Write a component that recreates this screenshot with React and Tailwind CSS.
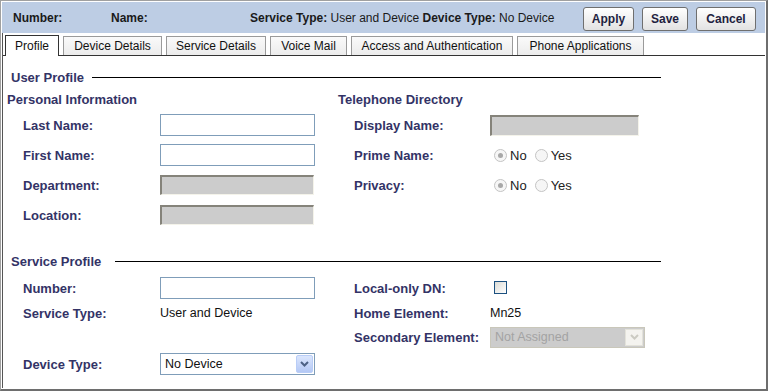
import React from "react";

function Btn({ w, children }) {
  return (
    <div
      className={`${w} h-[24px] flex items-center justify-center rounded-[3px] border border-[#6f6f6f] bg-gradient-to-b from-white to-[#e2e2e2] font-bold text-[12px] text-[#1f1f3f]`}
    >
      {children}
    </div>
  );
}

function Tab({ w, active, children }) {
  if (active) {
    return (
      <div
        className={`${w} h-[21px] -mb-px flex items-center justify-center border border-b-0 border-[#333] bg-white text-[12px] text-[#111]`}
      >
        {children}
      </div>
    );
  }
  return (
    <div
      className={`${w} h-[19px] flex items-center justify-center border border-b-0 border-[#9a9a9a] bg-gradient-to-b from-[#fafafa] to-[#ececec] text-[12px] text-[#111]`}
    >
      {children}
    </div>
  );
}

function Label({ w, children }) {
  return <div className={`${w} shrink-0 font-bold text-[13px] text-[#333366]`}>{children}</div>;
}

function TextInput() {
  return <div className="w-[155px] h-[22px] border border-[#7f9db9] bg-white" />;
}

function DisabledInput({ w, h }) {
  return (
    <div
      className={`${w} ${h} bg-[#cccccc] border-t-2 border-l-2 border-b border-r border-t-[#85837a] border-l-[#85837a] border-b-[#f4f3ea] border-r-[#f4f3ea]`}
    />
  );
}

function Radio({ checked }) {
  return (
    <div className="w-[13px] h-[13px] rounded-full border border-[#c4c4c4] bg-[#f6f6f6] flex items-center justify-center">
      {checked && <div className="w-[5px] h-[5px] rounded-full bg-[#a8a8a8]" />}
    </div>
  );
}

function RadioGroup() {
  return (
    <div className="flex items-center text-[13px] text-[#222]">
      <div className="ml-[4px]">
        <Radio checked />
      </div>
      <span className="ml-[3px]">No</span>
      <div className="ml-[8px]">
        <Radio />
      </div>
      <span className="ml-[3px]">Yes</span>
    </div>
  );
}

function Chevron({ color }) {
  return (
    <svg width="9" height="6" viewBox="0 0 9 6">
      <path d="M1 1 L4.5 4.5 L8 1" fill="none" stroke={color} strokeWidth="2" />
    </svg>
  );
}

function Row({ h, left, right }) {
  return (
    <div className={`${h} flex items-center`}>
      <div className="w-[335px] shrink-0 pl-[20px] flex items-center">{left}</div>
      <div className="pl-[16px] flex items-center">{right}</div>
    </div>
  );
}

function Heading({ children, mt, gap }) {
  return (
    <div className={`${mt} h-[16px] w-[658px] flex items-center pl-[8px]`}>
      <span className="font-bold text-[13px] text-[#333366] whitespace-nowrap">{children}</span>
      <div className={`flex-1 ${gap} border-t border-black`} />
    </div>
  );
}

export default function App() {
  return (
    <div className="w-[769px] h-[392px] bg-white font-['Liberation_Sans',Arial,sans-serif] text-[12px] leading-none">
      <div className="w-[768px] h-[391px] flex flex-col border-t border-l border-[#a0a0a0] border-r-2 border-b-2 border-r-[#6e6e6e] border-b-[#6e6e6e] p-px">
        {/* header bar */}
        <div className="h-[31px] shrink-0 bg-[#bdcde4] flex items-center pl-[11px] pr-[9px] text-[12px] text-[#1a1a1a]">
          <span className="font-bold w-[98px]">Number:</span>
          <span className="font-bold w-[139px]">Name:</span>
          <span className="whitespace-pre">
            <b>Service Type:</b> User and Device <b>Device Type:</b> No Device
          </span>
          <div className="ml-auto flex gap-[8px] mt-[3px]">
            <Btn w="w-[51px]">Apply</Btn>
            <Btn w="w-[46px]">Save</Btn>
            <Btn w="w-[60px]">Cancel</Btn>
          </div>
        </div>

        <div className="flex-1 flex flex-col border-l border-[#555]">
          {/* tabs */}
          <div className="h-[23px] shrink-0 flex items-end gap-[4px] pl-[2px] border-b border-[#333]">
            <Tab w="w-[54px]" active>Profile</Tab>
            <Tab w="w-[99px]">Device Details</Tab>
            <Tab w="w-[100px]">Service Details</Tab>
            <Tab w="w-[77px]">Voice Mail</Tab>
            <Tab w="w-[162px]">Access and Authentication</Tab>
            <Tab w="w-[127px]">Phone Applications</Tab>
          </div>

          {/* content */}
          <div className="flex flex-col">
            <Heading mt="mt-[13px]" gap="ml-[8px]">User Profile</Heading>

            <div className="mt-[6px] h-[16px] flex items-center font-bold text-[13px] text-[#333366]">
              <div className="w-[335px] pl-[4px]">Personal Information</div>
              <div>Telephone Directory</div>
            </div>

            <div className="mt-[3px]">
              <Row
                h="h-[30px]"
                left={<><Label w="w-[137px]">Last Name:</Label><TextInput /></>}
                right={<><Label w="w-[136px]">Display Name:</Label><DisabledInput w="w-[149px]" h="h-[21px]" /></>}
              />
              <Row
                h="h-[30px]"
                left={<><Label w="w-[137px]">First Name:</Label><TextInput /></>}
                right={<><Label w="w-[136px]">Prime Name:</Label><RadioGroup /></>}
              />
              <Row
                h="h-[30px]"
                left={<><Label w="w-[137px]">Department:</Label><DisabledInput w="w-[154px]" h="h-[20px]" /></>}
                right={<><Label w="w-[136px]">Privacy:</Label><RadioGroup /></>}
              />
              <Row
                h="h-[30px]"
                left={<><Label w="w-[137px]">Location:</Label><DisabledInput w="w-[154px]" h="h-[20px]" /></>}
                right={null}
              />
            </div>

            <Heading mt="mt-[23px]" gap="ml-[14px]">Service Profile</Heading>

            <div className="mt-[6px]">
              <Row
                h="h-[26px]"
                left={<><Label w="w-[137px]">Number:</Label><TextInput /></>}
                right={
                  <>
                    <Label w="w-[136px]">Local-only DN:</Label>
                    <div className="ml-[4px] -mt-[2px] w-[13px] h-[13px] border border-[#1c5180] bg-gradient-to-br from-[#dcdcd6] to-white" />
                  </>
                }
              />
              <Row
                h="h-[24px]"
                left={<><Label w="w-[137px]">Service Type:</Label><span className="text-[12.5px] text-[#111]">User and Device</span></>}
                right={<><Label w="w-[136px]">Home Element:</Label><span className="text-[12.5px] text-[#111]">Mn25</span></>}
              />
              <Row
                h="h-[24px]"
                left={null}
                right={
                  <>
                    <Label w="w-[136px]">Secondary Element:</Label>
                    <div className="w-[155px] h-[21px] border border-[#c9c7ba] bg-[#cccccc] flex items-center">
                      <span className="pl-[4px] text-[12.5px] text-[#a3a3a3]">Not Assigned</span>
                      <div className="ml-auto mr-px w-[18px] h-[17px] bg-[#f4f3ef] border border-[#e3e2da] flex items-center justify-center">
                        <Chevron color="#cbcac2" />
                      </div>
                    </div>
                  </>
                }
              />
              <Row
                h="h-[30px]"
                left={
                  <>
                    <Label w="w-[137px]">Device Type:</Label>
                    <div className="w-[155px] h-[22px] border border-[#7f9db9] bg-white flex items-center">
                      <span className="pl-[4px] text-[12.5px] text-[#111]">No Device</span>
                      <div className="ml-auto mr-px w-[17px] h-[18px] rounded-[2px] border border-[#b9cdf7] bg-gradient-to-b from-[#dbe6fd] to-[#b4c8f5] flex items-center justify-center">
                        <Chevron color="#4d6185" />
                      </div>
                    </div>
                  </>
                }
                right={null}
              />
            </div>
          </div>
        </div>
      </div>
    </div>
  );
}
